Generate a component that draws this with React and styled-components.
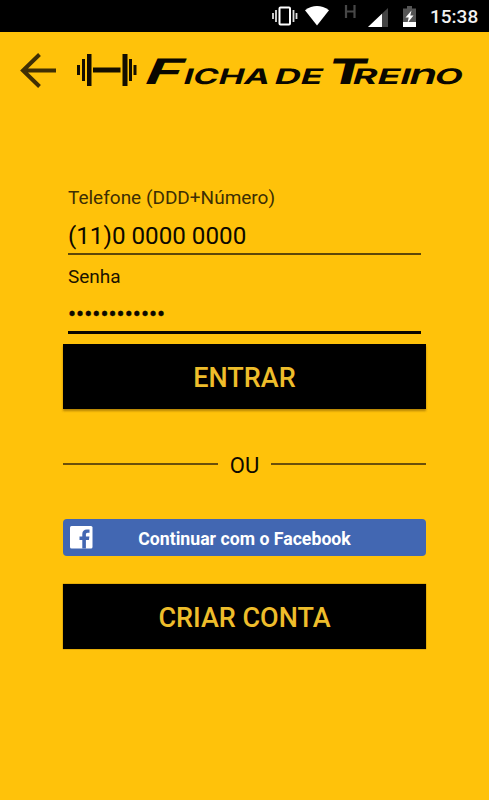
import { createGlobalStyle, styled } from 'styled-components';

const GlobalStyle = createGlobalStyle`
    * {
        box-sizing: border-box;
    }
    body {
        margin: 0;
        background: #ffc20a;
        font-family: Roboto, 'Liberation Sans', sans-serif;
    }
`;

const Screen = styled.div`
    width: 489px;
    height: 800px;
    overflow: hidden;
    background: #ffc20a;
`;

const StatusBar = styled.div`
    display: flex;
    align-items: center;
    justify-content: flex-end;
    height: 32px;
    padding-right: 11px;
    background: #000;
    svg {
        display: block;
    }
`;

const Clock = styled.span`
    margin-left: 14px;
    width: 48px;
    color: #f2f2f2;
    font-size: 19px;
    font-weight: 500;
    line-height: 32px;
    white-space: nowrap;
    padding-top: 2px;
`;

const Header = styled.header`
    display: flex;
    align-items: center;
    height: 76px;
    padding-left: 20px;
    svg {
        display: block;
    }
`;

const BackButton = styled.button`
    width: 37px;
    height: 36px;
    padding: 0;
    border: none;
    background: none;
`;

const Barbell = styled.svg`
    margin-left: 20px;
`;

const Brand = styled.svg`
    margin-left: -17px;
    overflow: visible;
    font-family: Inter, 'Liberation Sans', sans-serif;
    font-weight: 700;
`;

const Form = styled.form`
    display: flex;
    flex-direction: column;
    width: 363px;
    margin: 78px 0 0 63px;
`;

const Field = styled.div`
    display: flex;
    flex-direction: column;
    height: ${(props) => props.$height}px;
    padding-top: ${(props) => props.$top || 0}px;
    margin: 0 5px;
    border-bottom: ${(props) => (props.$active ? '3px' : '2px')} solid
        ${(props) => (props.$active ? '#0a0700' : '#5e4708')};
`;

const Label = styled.label`
    color: ${(props) => (props.$soft ? '#3d2e04' : '#1a1300')};
    font-size: 19px;
    line-height: 24px;
    white-space: nowrap;
`;

const Value = styled.span`
    margin-top: 11px;
    color: #0d0900;
    font-size: 24.2px;
    line-height: 30px;
    white-space: nowrap;
`;

const Dots = styled.span`
    margin-top: 10px;
    color: #0d0900;
    font-size: 24px;
    line-height: 30px;
    letter-spacing: 0;
    -webkit-text-stroke: 0.4px #0d0900;
`;

const Button = styled.button`
    height: 65px;
    margin-top: ${(props) => props.$top}px;
    padding: 2px 0 0;
    border: none;
    background: #000;
    color: #eebd2b;
    font-family: inherit;
    font-size: 27px;
    font-weight: 500;
    box-shadow: ${(props) =>
        props.$raised
            ? '0 2px 2px rgba(90, 60, 0, 0.45)'
            : '0 0 1px rgba(60, 40, 0, 0.8)'};
`;

const Divider = styled.div`
    display: flex;
    align-items: center;
    justify-content: space-between;
    height: 30px;
    margin-top: 40px;
    color: #0d0900;
    font-size: 22px;
    line-height: 30px;
    &::before,
    &::after {
        content: '';
        width: 155px;
        height: 2px;
        background: #6b4f0a;
    }
    span {
        padding-top: 3px;
    }
`;

const FacebookButton = styled.button`
    display: grid;
    grid-template-columns: 24px 1fr 24px;
    align-items: center;
    height: 37px;
    margin-top: 40px;
    padding: 0 7px;
    border: none;
    border-radius: 4px;
    background: #4267b2;
    color: #fff;
    font-family: inherit;
    font-size: 17.7px;
    font-weight: 700;
    svg {
        display: block;
    }
    span {
        padding-top: 3px;
    }
`;

function StatusIcons() {
    return (
        <>
            <svg width="26" height="32" viewBox="272 0 26 32">
                <rect
                    x="279.5"
                    y="7.5"
                    width="10.5"
                    height="17"
                    rx="1"
                    fill="none"
                    stroke="#fff"
                    strokeWidth="2"
                />
                <path
                    d="M276 10v12M273 13v6M293.5 10v12M296.5 13v6"
                    stroke="#ddd"
                    strokeWidth="1.8"
                />
            </svg>
            <svg width="34" height="32" viewBox="298 0 34 32">
                <path
                    d="M305 10.2Q317 1.8 329 10.2L317 25.5z"
                    fill="#fff"
                />
            </svg>
            <svg width="24" height="32" viewBox="332 0 24 32">
                <path
                    d="M346 5v13M354.5 5v13M346 11.5h8.500"
                    fill="none"
                    stroke="#474747"
                    strokeWidth="2.2"
                />
            </svg>
            <svg width="34" height="32" viewBox="356 0 34 32">
                <path d="M388 8v19h-20z" fill="#444" />
                <path d="M382 13.7V27h-14z" fill="#fff" />
            </svg>
            <svg width="26" height="32" viewBox="390 0 26 32">
                <path d="M403 8.5h4V6h5v2.500h4V27h-13z" fill="#555" />
                <path d="M403 22h13v5h-13z" fill="#fff" />
                <path
                    d="M411.500 10.500l-6 7h3.200l-1.200 5.500 6-7.500h-3.200z"
                    fill="#fff"
                />
            </svg>
        </>
    );
}

// each piece of the wordmark is stretched to its own width
const letters = [
    { text: 'F', x: 2, size: 35, width: 36, weight: 700, skew: -24 },
    { text: 'ICHA', x: 42, size: 21.5, width: 86, weight: 700, skew: -17 },
    { text: 'DE', x: 133, size: 21.5, width: 48, weight: 700, skew: -17 },
    { text: 'T', x: 186, size: 35, width: 38, weight: 800, skew: -14 },
    { text: 'REI', x: 211, size: 21.5, width: 58, weight: 700, skew: -17 },
    { text: 'n', x: 267, size: 28, width: 28, weight: 600, skew: -17 },
    { text: 'O', x: 293, size: 21.5, width: 28, weight: 700, skew: -17 },
];

function Wordmark() {
    return (
        <Brand width="366" height="60" viewBox="-20 0 366 60">
            {letters.map((item) => (
                <text
                    key={item.text}
                    transform={`translate(${item.x} 43.5) skewX(${item.skew})`}
                    fontSize={item.size}
                    fontWeight={item.weight}
                    textLength={item.width}
                    lengthAdjust="spacingAndGlyphs"
                    fill="#0a0700"
                >
                    {item.text}
                </text>
            ))}
        </Brand>
    );
}

export default function App() {
    return (
        <Screen>
            <GlobalStyle />
            <StatusBar>
                <StatusIcons />
                <Clock>15:38</Clock>
            </StatusBar>
            <Header>
                <BackButton type="button" aria-label="Voltar">
                    <svg width="37" height="36" viewBox="0 0 37 36">
                        <path
                            d="M36 18.500H4M19.500 2.500L3 18.500l16.500 16"
                            fill="none"
                            stroke="#402f04"
                            strokeWidth="4"
                        />
                    </svg>
                </BackButton>
                <Barbell width="60" height="34" viewBox="77 53 60 34">
                    <path
                        d="M77 65h3v10h-3zM82 59h3v22h-3zM87 54h4.500v32H87zM93 67.500h27.500v5H93zM122.500 54h5v32h-5zM129 59h3v22h-3zM133.500 65h3v10h-3z"
                        fill="#140e00"
                    />
                </Barbell>
                <Wordmark />
            </Header>
            <Form>
                <Field $height={69}>
                    <Label $soft>Telefone (DDD+Número)</Label>
                    <Value>(11)0 0000 0000</Value>
                </Field>
                <Field $height={79} $top={10} $active>
                    <Label>Senha</Label>
                    <Dots>••••••••••••</Dots>
                </Field>
                <Button type="button" $top={10} $raised>
                    ENTRAR
                </Button>
                <Divider>
                    <span>OU</span>
                </Divider>
                <FacebookButton type="button">
                    <svg width="23" height="23" viewBox="0 0 23 23">
                        <rect width="22.500" height="22.500" rx="1.500" fill="#fff" />
                        <path
                            d="M12.300 22.500v-8.500H9.500v-3.500h2.800V8c0-3 1.800-4.600 4.500-4.600h2.700v3.300h-1.700c-1.400 0-1.900.7-1.900 1.800v2h3.500l-.5 3.500h-3v8.500z"
                            fill="#4267b2"
                        />
                    </svg>
                    <span>Continuar com o Facebook</span>
                </FacebookButton>
                <Button type="button" $top={28}>
                    CRIAR CONTA
                </Button>
            </Form>
        </Screen>
    );
}
